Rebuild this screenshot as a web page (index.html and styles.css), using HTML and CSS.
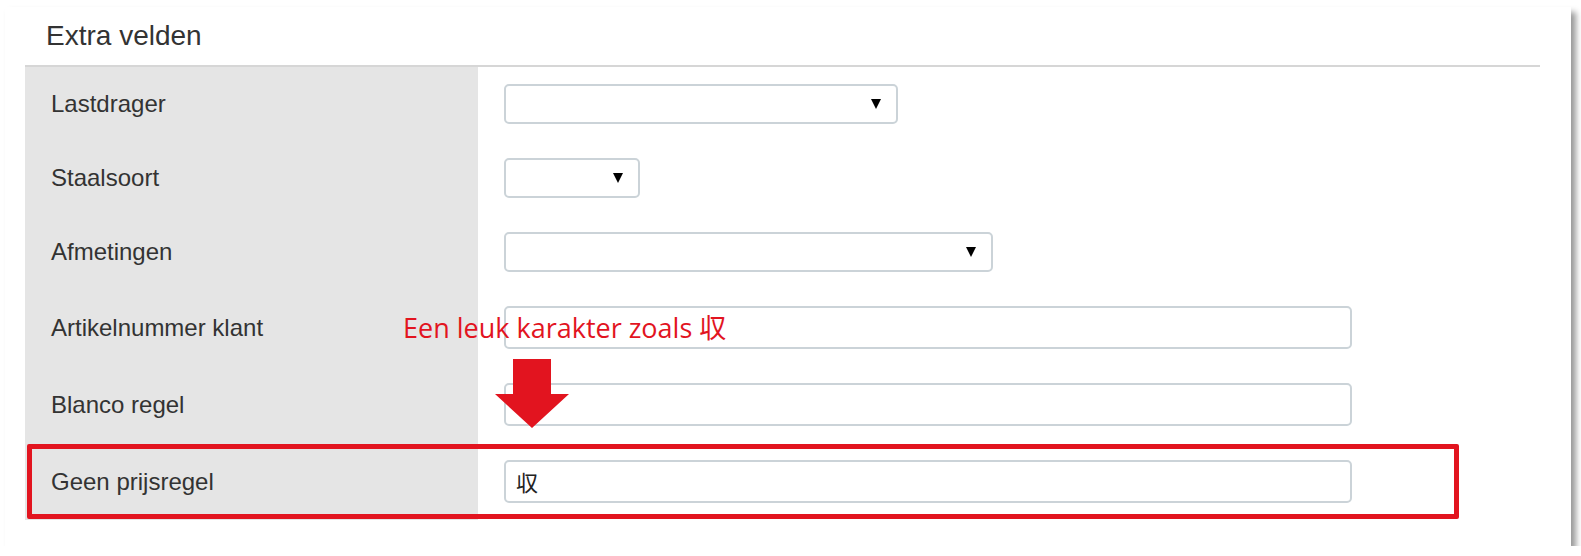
FILE: index.html
```html
<!DOCTYPE html>
<html lang="nl">
<head>
    <meta charset="UTF-8">
    <title>Extra velden</title>
    <link rel="stylesheet" href="styles.css">
</head>
<body>
    <div class="card">
        <h2 class="card-title">Extra velden</h2>
        <div class="fields">
            <div class="row">
                <div class="label">Lastdrager</div>
                <div class="control"><div class="select w-lg"><span class="caret"></span></div></div>
            </div>
            <div class="row">
                <div class="label">Staalsoort</div>
                <div class="control"><div class="select w-sm"><span class="caret"></span></div></div>
            </div>
            <div class="row">
                <div class="label">Afmetingen</div>
                <div class="control"><div class="select w-md"><span class="caret"></span></div></div>
            </div>
            <div class="row">
                <div class="label">Artikelnummer klant</div>
                <div class="control"><div class="input"></div></div>
            </div>
            <div class="row">
                <div class="label">Blanco regel</div>
                <div class="control"><div class="input"></div></div>
            </div>
            <div class="row">
                <div class="label">Geen prijsregel</div>
                <div class="control"><div class="input">収</div></div>
            </div>
        </div>

        <!-- annotaties -->
        <div class="note">Een leuk karakter zoals 収</div>
        <svg class="arrow" width="74" height="69" viewBox="0 0 74 69">
            <polygon points="18,0 56,0 56,35 74,35 37,69 0,35 18,35" fill="#e2141f"/>
        </svg>
        <div class="highlight"></div>
    </div>
</body>
</html>
```

FILE: styles.css
```css
body {
    margin: 0;
    background-color: #fff;
    font-family: "Liberation Sans", Arial, "Noto Sans CJK JP", sans-serif;
    color: #333;
}
.card {
    position: relative;
    box-sizing: border-box;
    width: 1566px;
    height: 539px;
    margin: 7px 0 0 5px;
    padding: 13px 31px 0 20px;
    background-color: #fff;
    box-shadow: 5px 5px 6px rgba(0,0,0,0.4);
}
.card-title {
    margin: 0;
    padding: 0 0 13px 21px;
    font-size: 28px;
    line-height: 32px;
    font-weight: normal;
    color: #333;
    border-bottom: 2px solid #d6d6d6;
}
.row {
    display: grid;
    grid-template-columns: 453px 1fr;
}
.label {
    display: flex;
    align-items: center;
    padding-left: 26px;
    background-color: #e5e5e5;
    font-size: 24px;
    color: #333;
}
.control {
    padding: 17px 0 17px 26px;
}
.select, .input {
    box-sizing: border-box;
    border: 2px solid #cbd3d8;
    border-radius: 5px;
    background-color: #fff;
}
.select {
    height: 40px;
    display: flex;
    align-items: center;
    justify-content: flex-end;
    padding-right: 15px;
}
.w-lg { width: 394px; }
.w-sm { width: 136px; }
.w-md { width: 489px; }
.caret {
    width: 0;
    height: 0;
    border-left: 5px solid transparent;
    border-right: 5px solid transparent;
    border-top: 10px solid #000;
}
.input {
    width: 848px;
    height: 43px;
    padding-left: 10px;
    font-family: "Noto Sans CJK JP", sans-serif;
    font-size: 22px;
    line-height: 39px;
    color: #222;
}
.note {
    position: absolute;
    left: 398px;
    top: 300px;
    font-family: "Open Sans", "Noto Sans CJK JP", sans-serif;
    font-size: 27px;
    color: #e2141f;
}
.arrow {
    position: absolute;
    left: 490px;
    top: 352px;
}
.highlight {
    position: absolute;
    left: 22px;
    top: 437px;
    width: 1422px;
    height: 65px;
    border: 5px solid #e2141f;
    border-radius: 2px;
}
```
